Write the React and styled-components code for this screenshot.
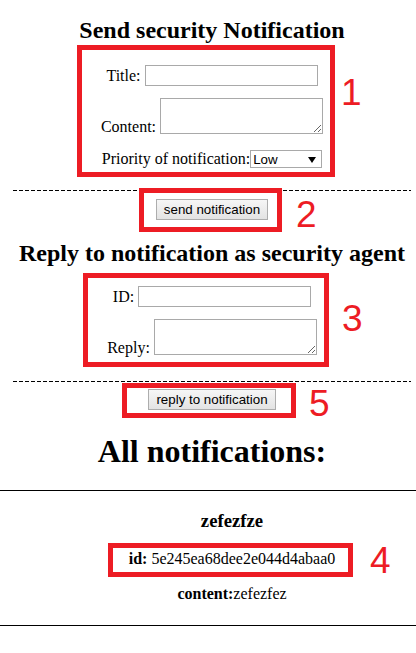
import React from 'react';
import styled, { createGlobalStyle } from 'styled-components';

const GlobalStyle = createGlobalStyle`
  body {
    margin: 0;
    background: #fff;
    color: #000;
    font-family: "Liberation Serif", "Times New Roman", serif;
    font-size: 16px;
  }
`;

const Page = styled.div`
  width: 416px;
  overflow: hidden;
  padding-top: 17px;
`;

const Heading = styled.h2`
  margin: ${p => p.$mt || 0}px 0 0 8px;
  font-size: ${p => p.$size || 24}px;
  line-height: ${p => p.$lh || 27}px;
  font-weight: bold;
  text-align: center;
`;

// a red annotation frame with its number beside it
const Marked = styled.div`
  display: flex;
  align-items: flex-start;
  margin-left: ${p => p.$x}px;
  margin-top: ${p => p.$mt || 0}px;
`;

const RedBox = styled.div`
  box-sizing: border-box;
  width: ${p => p.$w}px;
  height: ${p => p.$h}px;
  border: 5px solid #ed1c24;
  padding: ${p => p.$pt || 0}px 0 0 ${p => p.$pl || 0}px;
  display: flex;
  flex-direction: column;
  align-items: center;
`;

const Num = styled.span`
  margin: ${p => p.$dy}px 0 0 ${p => p.$dx}px;
  font-family: "Liberation Sans", Arial, sans-serif;
  font-size: 37px;
  line-height: 26px;
  color: #ed1c24;
`;

const Row = styled.div`
  display: flex;
  align-items: ${p => p.$align || 'center'};
  gap: ${p => (p.$gap === undefined ? 4 : p.$gap)}px;
  margin-top: ${p => p.$mt || 0}px;
`;

const Label = styled.label`
  line-height: ${p => p.$lh || 21}px;
  white-space: nowrap;
`;

const TextInput = styled.input`
  box-sizing: border-box;
  width: 173px;
  height: 21px;
  margin: 0;
  padding: 1px 2px;
  border: 1px solid #a9a9a9;
  font: 13.33px "Liberation Sans", Arial, sans-serif;
  background: #fff;
`;

const TextArea = styled.textarea`
  box-sizing: border-box;
  width: 163px;
  height: 36px;
  margin: 0;
  padding: 2px;
  border: 1px solid #a9a9a9;
  font: 13.33px "Liberation Mono", monospace;
  background: #fff;
  display: block;
`;

const SelectWrap = styled.span`
  position: relative;
  display: inline-flex;

  &::after {
    content: '';
    position: absolute;
    right: 6px;
    top: 7px;
    border-left: 4px solid transparent;
    border-right: 4px solid transparent;
    border-top: 6px solid #000;
    pointer-events: none;
  }
`;

const Select = styled.select`
  box-sizing: border-box;
  width: 72px;
  height: 18px;
  margin: 0;
  padding: 0 0 0 2px;
  border: 1px solid #a9a9a9;
  border-radius: 0;
  font: 13.33px "Liberation Sans", Arial, sans-serif;
  color: #000;
  background: #fff;
  appearance: none;
`;

const Button = styled.button`
  box-sizing: border-box;
  width: ${p => p.$w}px;
  height: 21px;
  margin: 0;
  padding: 0 6px;
  border: 1px solid #adadad;
  border-radius: 0;
  background: linear-gradient(#f6f6f6, #e3e3e3);
  font: 13.33px "Liberation Sans", Arial, sans-serif;
  color: #000;
`;

const Dashed = styled.div`
  height: 1px;
  margin: ${p => p.$mt}px 5px 0 13px;
  background: repeating-linear-gradient(90deg, #000 0 4px, transparent 4px 6px);
`;

const Solid = styled.div`
  height: 1px;
  margin-top: ${p => p.$mt}px;
  background: #000;
`;

const NotificationList = styled.ul`
  list-style: none;
  margin: 19px 0 0;
  padding: 0 0 0 48px;
`;

const NotificationTitle = styled.h3`
  margin: 0;
  font-size: 18.72px;
  line-height: 21px;
  text-align: center;
`;

const Field = styled.p`
  margin: ${p => p.$mt || 0}px 0 0;
  line-height: 18px;
  text-align: center;
  white-space: nowrap;
`;

const notifications = [
  { id: '5e245ea68dee2e044d4abaa0', title: 'zefezfze', content: 'zefezfez' },
];

export default function App() {
  return (
    <Page>
      <GlobalStyle />
      <Heading>Send security Notification</Heading>

      <Marked $x={77} $mt={1}>
        <RedBox $w={258} $h={132} $pt={15} $pl={12}>
          <Row>
            <Label>Title:</Label>
            <TextInput type="text" />
          </Row>
          <Row $align="flex-end" $mt={12}>
            <Label $lh={14}>Content:</Label>
            <TextArea />
          </Row>
          <Row $mt={16} $gap={0}>
            <Label $lh={18}>Priority of notification:</Label>
            <SelectWrap>
              <Select defaultValue="low">
                <option value="low">Low</option>
                <option value="medium">Medium</option>
                <option value="high">High</option>
              </Select>
            </SelectWrap>
          </Row>
        </RedBox>
        <Num $dx={6} $dy={35}>1</Num>
      </Marked>

      <Dashed $mt={13} />
      <Marked $x={139} $mt={-3}>
        <RedBox $w={143} $h={44} $pt={6} $pl={3}>
          <Button $w={112}>send notification</Button>
        </RedBox>
        <Num $dx={14} $dy={14}>2</Num>
      </Marked>

      <Heading $mt={8}>Reply to notification as security agent</Heading>

      <Marked $x={83} $mt={6}>
        <RedBox $w={246} $h={94} $pt={8} $pl={12}>
          <Row>
            <Label>ID:</Label>
            <TextInput type="text" />
          </Row>
          <Row $align="flex-end" $mt={12}>
            <Label $lh={14}>Reply:</Label>
            <TextArea />
          </Row>
        </RedBox>
        <Num $dx={13} $dy={33}>3</Num>
      </Marked>

      <Dashed $mt={14} />
      <Marked $x={122} $mt={1}>
        <RedBox $w={174} $h={35} $pt={1} $pl={6}>
          <Button $w={128}>reply to notification</Button>
        </RedBox>
        <Num $dx={13} $dy={8}>5</Num>
      </Marked>

      <Heading $mt={15} $size={32} $lh={36}>All notifications:</Heading>

      <Solid $mt={21} />
      <NotificationList>
        {notifications.map(n => (
          <li key={n.id}>
            <NotificationTitle>{n.title}</NotificationTitle>
            <Marked $x={60} $mt={12}>
              <RedBox $w={245} $h={34} $pt={2} $pl={3}>
                <Field>
                  <b>id:</b> {n.id}
                </Field>
              </RedBox>
              <Num $dx={17} $dy={5}>4</Num>
            </Marked>
            <Field $mt={8}>
              <b>content:</b>{n.content}
            </Field>
          </li>
        ))}
      </NotificationList>
      <Solid $mt={22} />
    </Page>
  );
}
